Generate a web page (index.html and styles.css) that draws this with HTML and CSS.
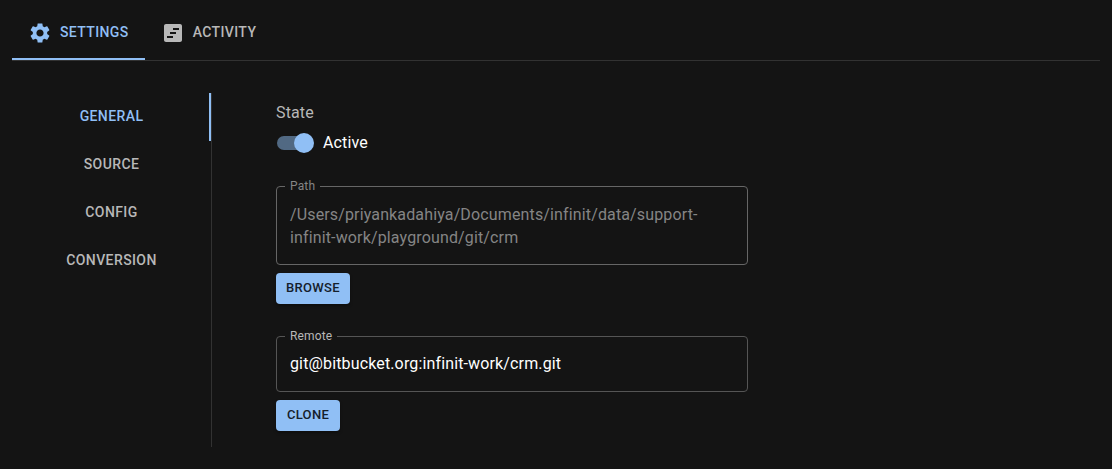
FILE: index.html
```html
<!DOCTYPE html>
<html lang="en">
<head>
<meta charset="utf-8">
<title>Settings</title>
<link rel="stylesheet" href="styles.css">
</head>
<body>
<nav class="tabs">
  <a class="tab selected">
    <svg class="icon" viewBox="0 0 24 24"><path d="M19.14 12.94c.04-.3.06-.61.06-.94 0-.32-.02-.64-.07-.94l2.03-1.58c.18-.14.23-.41.12-.61l-1.92-3.32c-.12-.22-.37-.29-.59-.22l-2.39.96c-.5-.38-1.03-.7-1.62-.94l-.36-2.54c-.04-.24-.24-.41-.48-.41h-3.84c-.24 0-.43.17-.47.41l-.36 2.54c-.59.24-1.13.57-1.62.94l-2.39-.96c-.22-.08-.47 0-.59.22L2.74 8.87c-.12.21-.08.47.12.61l2.03 1.58c-.05.3-.09.63-.09.94s.02.64.07.94l-2.03 1.58c-.18.14-.23.41-.12.61l1.92 3.32c.12.22.37.29.59.22l2.39-.96c.5.38 1.03.7 1.62.94l.36 2.54c.05.24.24.41.48.41h3.84c.24 0 .44-.17.47-.41l.36-2.54c.59-.24 1.13-.56 1.62-.94l2.39.96c.22.08.47 0 .59-.22l1.92-3.32c.12-.22.07-.47-.12-.61l-2.01-1.58zM12 15.6c-1.98 0-3.6-1.62-3.6-3.6s1.62-3.6 3.6-3.6 3.6 1.62 3.6 3.6-1.62 3.6-3.6 3.6z"/></svg>
    <span>SETTINGS</span>
  </a>
  <a class="tab">
    <svg class="icon" viewBox="0 0 24 24"><path fill-rule="evenodd" d="M19 3H5c-1.100 0-2 .9-2 2v14c0 1.100.9 2 2 2h14c1.100 0 2-.9 2-2V5c0-1.100-.9-2-2-2zM12 17H6v-2h6v2zM15 13H9v-2h6v2zM18 9h-6V7h6v2z"/></svg>
    <span>ACTIVITY</span>
  </a>
</nav>
<main class="content">
  <nav class="side">
    <a class="side-tab selected">GENERAL</a>
    <a class="side-tab">SOURCE</a>
    <a class="side-tab">CONFIG</a>
    <a class="side-tab">CONVERSION</a>
  </nav>
  <form class="form">
    <div class="label">State</div>
    <div class="switch-row"><span class="switch"><span class="thumb"></span></span><span class="switch-label">Active</span></div>
    <fieldset class="field disabled">
      <legend>Path</legend>
      <div class="value">/Users/priyankadahiya/Documents/infinit/data/support-infinit-work/playground/git/crm</div>
    </fieldset>
    <button type="button" class="button">BROWSE</button>
    <fieldset class="field remote">
      <legend>Remote</legend>
      <div class="value">git@bitbucket.org:infinit-work/crm.git</div>
    </fieldset>
    <button type="button" class="button">CLONE</button>
  </form>
</main>
</body>
</html>
```
FILE: styles.css
```css
* { box-sizing: border-box; }
body {
  margin: 0;
  padding: 0 12px;
  height: 469px;
  overflow: hidden;
  background: #141414;
  color: #fff;
  font-family: Roboto, sans-serif;
  font-size: 16px;
  letter-spacing: 0.14px;
}
.tabs {
  display: flex;
  height: 61px;
  border-bottom: 1px solid #323232;
}
.tab {
  display: flex;
  align-items: center;
  gap: 8px;
  height: 60px;
  padding: 7px 16px 0;
  border-bottom: 2px solid transparent;
  color: #b8b8b8;
  font-size: 14px;
  font-weight: 500;
  letter-spacing: 0.38px;
}
.tab.selected { color: #90bff5; border-color: #90bff5; }
.tab span { margin-top: -1px; }
.icon { width: 24px; height: 24px; fill: currentColor; }
.content { display: flex; padding-top: 32px; }
.side {
  width: 200px;
  height: 354px;
  border-right: 1px solid #323232;
}
.side-tab {
  display: flex;
  align-items: center;
  justify-content: center;
  height: 48px;
  padding-bottom: 3px;
  border-right: 2px solid transparent;
  border-left: 2px solid transparent;
  color: #b8b8b8;
  font-size: 14px;
  font-weight: 500;
  letter-spacing: 0.4px;
}
.side-tab.selected { color: #90bff5; border-right-color: #90bff5; }
.form { width: 472px; margin-left: 64px; padding-top: 8px; }
.label { line-height: 23px; color: #b8b8b8; }
.switch-row {
  display: flex;
  align-items: center;
  gap: 9px;
  height: 38px;
  padding-left: 1px;
}
.switch {
  display: flex;
  align-items: center;
  justify-content: flex-end;
  width: 37px;
  height: 14px;
  background: linear-gradient(#516983, #516983) 0 0 / 34px 14px no-repeat;
  border-radius: 7px;
}
.switch-label { padding-bottom: 2px; }
.thumb {
  flex: none;
  width: 20px;
  height: 20px;
  border-radius: 50%;
  background: #90bff5;
}
.field {
  width: 472px;
  height: 85px;
  margin: 18px 0 8px;
  padding: 0 13px;
  border: 1px solid #555;
  border-radius: 4px;
}
.field legend {
  height: 12px;
  margin-left: -5px;
  padding: 0 5px;
  color: #b8b8b8;
  font-size: 12px;
  line-height: 12px;
}
.value { padding-top: 11px; line-height: 23px; }
.disabled { border-color: #666; }
.disabled legend, .disabled .value { color: #858585; }
.remote { height: 62px; margin-top: 26px; }
.remote .value { padding-top: 10px; }
.button {
  display: block;
  min-width: 64px;
  height: 31px;
  padding: 0 10px 2px;
  border: 0;
  border-radius: 4px;
  background: #90bff5;
  color: #15202b;
  font: 500 13px Roboto, sans-serif;
  letter-spacing: 0.32px;
  box-shadow: 0 2px 3px rgba(0, 0, 0, 0.35);
}
```
